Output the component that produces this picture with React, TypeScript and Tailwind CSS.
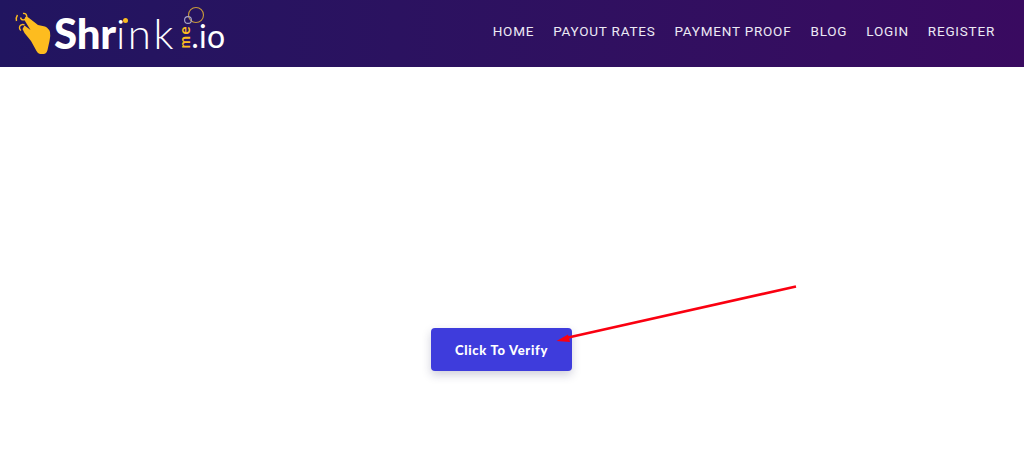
import React from "react";

function Hand() {
  return (
    <svg width="38" height="46" viewBox="14 8 38 46" className="shrink-0 mb-[-4px]">
      <path d="M26 12.5 Q27.5 12.5 29 14 L38 21 L45 22.5 Q49 24.5 50 28 Q50.8 32 49.5 37 L47.5 46 Q46.5 50 43.5 50 L40 50 Q38 50 36.5 47 L31 37 L24.5 29 L22.5 25 L24.5 21.5 L30.5 26 L25 17 Q24 14 26 12.5 Z" fill="#fdbc1f" />
      <path d="M23 9.5 A3.2 3.2 0 1 1 20.5 13.5" fill="none" stroke="#fdbc1f" strokeWidth="1.4" />
      <path d="M24.5 21 A3.2 3.2 0 1 0 21 26.5" fill="none" stroke="#fdbc1f" strokeWidth="1.4" />
      <path d="M17.5 11 Q15.5 14 16.5 17" fill="none" stroke="#fdbc1f" strokeWidth="1.4" />
    </svg>
  );
}

function Logo() {
  return (
    <div className="relative flex items-end h-[67px] pl-[14px] pb-[13px] font-['Lato',sans-serif] text-white">
      <Hand />
      <span className="ml-[2px] text-[42px] leading-[42px] font-black tracking-[-0.2px]">Shr</span>
      <span className="text-[42px] leading-[42px] font-light tracking-[2.6px]">ink</span>
      <span className="text-[15px] leading-[10px] font-bold text-[#fdbc1f] [writing-mode:vertical-rl] rotate-180 mb-[5px] ml-[3px] tracking-[1.5px]">me</span>
      <span className="ml-[2px] text-[32px] leading-[36px] font-normal tracking-[0.3px]">.io</span>
      <span className="absolute left-[123px] top-[18px] w-[5px] h-[5px] rounded-full bg-[#fdbc1f]" />
      <svg width="30" height="30" viewBox="0 0 30 30" className="absolute left-[180px] top-[5px]">
        <circle cx="16" cy="10" r="7.5" fill="none" stroke="#c99a3a" strokeWidth="1.1" />
        <circle cx="8" cy="15" r="3.4" fill="none" stroke="#a9a6c8" strokeWidth="1.1" />
      </svg>
    </div>
  );
}

const links = ["HOME", "PAYOUT RATES", "PAYMENT PROOF", "BLOG", "LOGIN", "REGISTER"];

export default function App() {
  return (
    <div className="relative min-h-[469px] bg-white overflow-hidden">
      <header className="flex items-start justify-between h-[67px] bg-gradient-to-r from-[#211560] to-[#390a60]">
        <Logo />
        <nav className="flex gap-[19px] pt-[23px] pr-[29px] font-['Roboto',sans-serif] text-[13.5px] leading-[17px] font-normal tracking-[0.78px] text-[#ece9f4]">
          {links.map((l) => (
            <span key={l}>{l}</span>
          ))}
        </nav>
      </header>
      <main className="flex justify-center pt-[261px] pr-[21px]">
        <button className="w-[141px] h-[43px] pt-[2px] rounded-[4px] bg-[#3e3cdc] text-white text-[13px] font-black tracking-[0.7px] font-['Lato',sans-serif] shadow-[0_4px_10px_rgba(40,40,90,0.22)]">
          Click To Verify
        </button>
      </main>
      <svg className="absolute left-0 top-0 pointer-events-none" width="1024" height="469">
        <line x1="796" y1="286.5" x2="566" y2="338" stroke="#fa0010" strokeWidth="2.6" />
        <polygon points="556.5,341 568,334.5 570,342" fill="#fa0010" />
      </svg>
    </div>
  );
}
